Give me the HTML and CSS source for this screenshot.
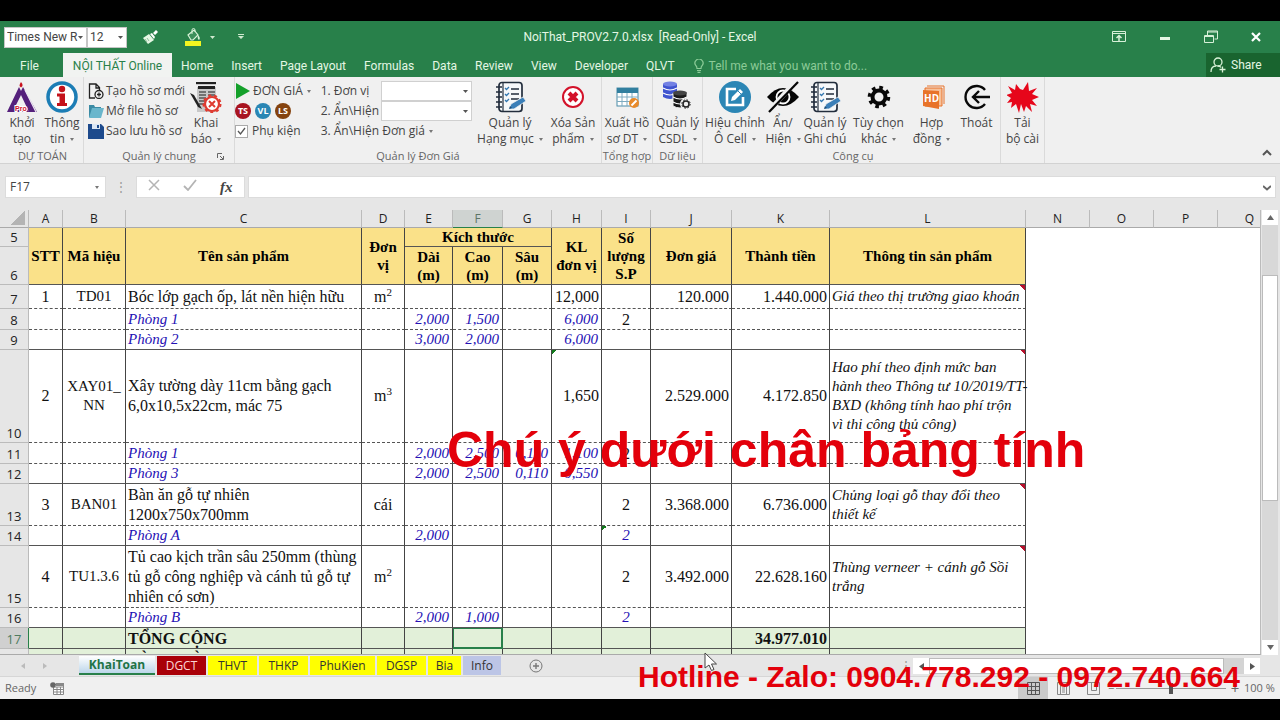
FILE: index.html
```html
<!DOCTYPE html>
<html lang="vi">
<head>
<meta charset="utf-8">
<title>NoiThat_PROV2.7.0.xlsx [Read-Only] - Excel</title>
<link rel="stylesheet" href="styles.css">
</head>
<body>
<svg class="defs" aria-hidden="true">
  <symbol id="i-note" viewBox="0 0 32 32">
    <rect x="5" y="1.5" width="23" height="29" rx="3" fill="#f6f8fa" stroke="#222d3c" stroke-width="1.7"/>
    <path d="M9 2v28" stroke="#222d3c" stroke-width="1.2"/>
    <path d="M2 6h6M2 11h6M2 16h6M2 21h6M2 26h6" stroke="#222d3c" stroke-width="1.7"/>
    <path d="M11 7l1.500 1.500L15 6M11 13l1.500 1.500L15 12M11 19l1.500 1.500L15 18" fill="none" stroke="#3277b0" stroke-width="1.300"/>
    <path d="M17 8h8M17 13h8M17 18h8" stroke="#222d3c" stroke-width="1.400"/>
    <path d="M15 28l2-5 12-7 3 4-12 8z" fill="#3b7fb8" stroke="#f0f0f0" stroke-width=".8"/>
    <path d="M15 28l1-3 2 2z" fill="#174b78"/>
  </symbol>
</svg>
<div class="app">
  <header class="top">
    <div class="titlebar">
      <div class="quick">
        <select class="qfont" aria-label="Font"><option>Times New R</option></select>
        <select class="qsize" aria-label="Font size"><option>12</option></select>
        <button class="qbtn brush" aria-label="Format painter"><svg width="16" height="15" viewBox="0 0 16 15"><path d="M1 8l6-4 5 6-6 4z" fill="#e6f7e4"/><path d="M8 4l2-1 3 4-1 2zM11 3l3-3 2 2-3 3z" fill="#fff"/><path d="M3 9l2 3M5 8l2 3" stroke="#68a67c" stroke-width=".7"/></svg></button>
        <button class="qbtn fill" aria-label="Fill colour"><svg width="16" height="18" viewBox="0 0 16 18"><path d="M3 7l6-5 4 5-5 5H6z" fill="#3d8f5b" stroke="#d9f2d8" stroke-width="1.200"/><path d="M7 6V2q0-1.500 1.500-1.500T10 2v2" fill="none" stroke="#d9f2d8"/><path d="M13 7q3 3 1 5-2-1-1-5z" fill="#d9f2d8"/><rect y="13" width="16" height="5" fill="#f3f520"/></svg></button>
        <button class="qbtn mini" aria-label="More fill colours"><svg width="5" height="3"><path d="M0 0h5L2.500 3z" fill="#cfe9cf"/></svg></button>
        <button class="qbtn custom" aria-label="Customize toolbar"><svg width="6" height="6"><path d="M0 0h6v1H0zM0 2h6L3 5z" fill="#cfe9cf"/></svg></button>
      </div>
      <div class="doc">NoiThat_PROV2.7.0.xlsx&nbsp; [Read-Only] - Excel</div>
      <div class="win">
        <button aria-label="Ribbon display options"><svg width="14" height="12" viewBox="0 0 14 12" fill="none" stroke="#d7f0d8"><path d="M.5.5h13v10H.5zM.5 2.500h13"/><path d="M7 10V4.500M4.500 7L7 4.500 9.500 7" stroke-width="1.500"/></svg></button>
        <button aria-label="Minimize"><svg width="14" height="12"><path d="M2 6h10v3H2z" fill="#e4f7e4"/></svg></button>
        <button aria-label="Restore"><svg width="14" height="14" viewBox="0 0 14 14" fill="none" stroke="#d7f0d8"><path d="M.5 5.500h9v7h-9zM.5 6.500h9M3.500 5V1h10v8h-3M3.500 2h10"/></svg></button>
        <button aria-label="Close"><svg width="12" height="12" viewBox="0 0 12 12"><path d="M2 2l8 8M10 2l-8 8" stroke="#fff" stroke-width="2.200"/></svg></button>
      </div>
    </div>
    <nav class="tabs">
      <button class="file">File</button>
      <button class="active">NỘI THẤT Online</button>
      <button>Home</button><button>Insert</button><button>Page Layout</button><button>Formulas</button><button>Data</button><button>Review</button><button>View</button><button>Developer</button><button>QLVT</button>
      <button class="tell"><svg width="10" height="14" viewBox="0 0 10 14" fill="none" stroke="#8ccb98" stroke-width="1.200"><path d="M3 9.500q0-2-1.200-3A4 4 0 1 1 8.200 6.500Q7 7.500 7 9.500zM3 11.500h4M3.500 13.300h3"/></svg>Tell me what you want to do...</button>
      <button class="share"><svg width="16" height="16" viewBox="0 0 16 16" fill="none" stroke="#d9f2d8" stroke-width="1.300"><circle cx="8" cy="5" r="4"/><path d="M1 15q0-6 5-6M8 9q2 0 3 1.500M12.500 9.500v6M9.500 12.500h6"/></svg>Share</button>
    </nav>
  </header>

  <section class="ribbon">
    <div class="group g1">
      <div class="tools">
        <button class="big"><svg class="ico" viewBox="0 0 32 32"><path d="M15 1q2 2 1.500 4L15 6.500 13.500 5Q13.500 3 15 1z" fill="#c8101c"/><path d="M13 6L1 31h22l-3-5H9l6-12 8 17h8L17 6l-2 4z" fill="#55207c"/><path d="M19 9l11 22" stroke="#efe9f4" stroke-width="1.200"/><text x="9" y="30" class="pro">Pro</text></svg><span>Khởi<br>tạo</span></button>
        <button class="big"><svg class="ico" viewBox="0 0 32 32"><circle cx="16" cy="16" r="14" fill="#fff" stroke="#1c7db5" stroke-width="3.500"/><circle cx="16" cy="8" r="3.200" fill="#c4121b"/><path d="M11 12.500h8V22h2v3H11v-3h2.500v-6.500H11z" fill="#c4121b"/></svg><span>Thông<br>tin <i class="dd"></i></span></button>
      </div>
      <div class="glabel">DỰ TOÁN</div>
    </div>
    <div class="group g2">
      <div class="tools">
        <div class="stack">
          <button><svg class="sico" viewBox="0 0 16 16" fill="none" stroke="#222" stroke-width="1.300"><path d="M7 15H1.500V1H8l3.500 3.500V7M8 1v4h4"/><circle cx="11" cy="11.500" r="4"/><path d="M11 9.500v4M9 11.500h4"/></svg>Tạo hồ sơ mới</button>
          <button><svg class="sico" viewBox="0 0 16 16"><path d="M1 2h5l1 2h6v10H1z" fill="#3c8ba4"/><path d="M4 5h12l-3 10H1z" fill="#6ab6cc"/></svg>Mở file hồ sơ</button>
          <button><svg class="sico" viewBox="0 0 16 16"><path d="M0 1h13l3 3v12H0z" fill="#1d4a8c"/><path d="M4 1h8v5H4z" fill="#dbe6f4"/><path d="M9 2h2v3H9z" fill="#1d4a8c"/></svg>Sao lưu hồ sơ</button>
        </div>
        <button class="big"><svg class="ico" viewBox="0 0 32 32"><path d="M6 1h20v3H6zM7 6h19v25H7z" fill="#c8c8c8"/><path d="M6 1h20v2H6zM8 5h17v3H8z" fill="#222"/><path d="M9 11h7M9 14h7M9 17h7M9 20h7M9 23h7M18 11h7M18 14h7M18 17h7" stroke="#555" stroke-width="1.500"/><path d="M0 12l4 2 8 14-4-2z" fill="#222"/><circle cx="22" cy="23" r="7" fill="#fff" stroke="#df3a30" stroke-width="2.200"/><circle cx="22" cy="23" r="8.500" fill="none" stroke="#df3a30" stroke-width="2" stroke-dasharray="3 3"/><path d="M19 20l6 6M25 20l-6 6" stroke="#df3a30" stroke-width="2"/></svg><span>Khai<br>báo <i class="dd"></i></span></button>
      </div>
      <div class="glabel">Quản lý chung<svg class="launch" width="7" height="7" viewBox="0 0 7 7" fill="none" stroke="#666"><path d="M.5 5V.5H5M3 3l3 3M6.500 3v3.500H3"/></svg></div>
    </div>
    <div class="group g3">
      <div class="tools">
        <div class="stack unit">
          <button><svg class="sico" viewBox="0 0 16 16"><path d="M1 0l14 8L1 16z" fill="#14a02a"/></svg>ĐƠN GIÁ <i class="dd"></i></button>
          <div class="dots"><button class="c1">TS</button><button class="c2">VL</button><button class="c3">LS</button></div>
          <label><input type="checkbox" checked>Phụ kiện</label>
        </div>
        <div class="stack combos">
          <div class="row"><label for="dv">1. Đơn vị</label><select id="dv"></select></div>
          <div class="row"><label for="ah">2. Ẩn\Hiện</label><select id="ah"></select></div>
          <button>3. Ẩn\Hiện Đơn giá <i class="dd"></i></button>
        </div>
        <button class="big w69"><svg class="ico"><use href="#i-note"/></svg><span>Quản lý<br>Hạng mục <i class="dd"></i></span></button>
        <button class="big w56"><svg class="ico" viewBox="0 0 32 32"><circle cx="16" cy="16" r="10" fill="#fff" stroke="#d3122a" stroke-width="2"/><path d="M12 12l8 8M20 12l-8 8" stroke="#d3122a" stroke-width="4"/></svg><span>Xóa Sản<br>phẩm <i class="dd"></i></span></button>
      </div>
      <div class="glabel">Quản lý Đơn Giá</div>
    </div>
    <div class="group g4">
      <div class="tools"><button class="big"><svg class="ico" viewBox="0 0 32 32"><rect x="6" y="7" width="21" height="18" fill="#fff" stroke="#4b8ba8"/><path d="M6 7h21v5H6z" fill="#317f9f"/><path d="M6 16h21M6 20.500h21M11 12v13M16 12v13M21 12v13" stroke="#7eabc0"/><circle cx="23" cy="22" r="5" fill="#e88a2a"/><path d="M20.500 24.500l5-5" stroke="#fff" stroke-width="2"/></svg><span>Xuất Hồ<br>sơ DT <i class="dd"></i></span></button></div>
      <div class="glabel">Tổng hợp</div>
    </div>
    <div class="group g5">
      <div class="tools"><button class="big"><svg class="ico" viewBox="0 0 32 32"><path d="M1 3v13q7 4 14 0V3z" fill="#4054cf"/><ellipse cx="8" cy="3" rx="7" ry="2.500" fill="#7381e4"/><path d="M1 7q7 4 14 0M1 12q7 4 14 0" fill="none" stroke="#fff" stroke-width="1.200"/><path d="M11 12v13q7 4 14 0V12z" fill="#1b1b1b" stroke="#f0f0f0"/><ellipse cx="18" cy="12" rx="7" ry="2.500" fill="#444"/><path d="M11 16q7 4 14 0M11 21q7 4 14 0" fill="none" stroke="#fff" stroke-width="1.200"/><circle cx="24" cy="23" r="6" fill="#f0f0f0"/><circle cx="24" cy="23" r="3" fill="none" stroke="#222" stroke-width="1.500"/><circle cx="24" cy="23" r="4.200" fill="none" stroke="#222" stroke-dasharray="1.600 1.700"/></svg><span>Quản lý<br>CSDL <i class="dd"></i></span></button></div>
      <div class="glabel">Dữ liệu</div>
    </div>
    <div class="group g6">
      <div class="tools">
        <button class="big w58"><svg class="ico" viewBox="0 0 32 32"><circle cx="16" cy="16" r="16" fill="#2b86b5"/><path d="M17 8H8v16h16v-8" fill="none" stroke="#fff" stroke-width="2.600"/><path d="M13 16l8-8 3 3-8 8-4 1z" fill="#fff"/><path d="M19 10l3 3" stroke="#2b86b5"/></svg><span>Hiệu chỉnh<br>Ô Cell <i class="dd"></i></span></button>
        <button class="big w38"><svg class="ico" viewBox="0 0 32 32"><path d="M0 16Q16-2 32 16 16 34 0 16z" fill="#050505"/><circle cx="16" cy="16" r="6.500" fill="none" stroke="#fff" stroke-width="1.800"/><circle cx="16" cy="16" r="3" fill="#050505"/><path d="M29 0L1 31" stroke="#f0f0f0" stroke-width="5"/><path d="M31 1L2 31" stroke="#050505" stroke-width="2.200"/></svg><span>Ẩn/<br>Hiện <i class="dd"></i></span></button>
        <button class="big w46"><svg class="ico"><use href="#i-note"/></svg><span>Quản lý<br>Ghi chú</span></button>
        <button class="big w61"><svg class="ico" viewBox="0 0 32 32" fill="none" stroke="#080808"><circle cx="16" cy="16" r="6.500" stroke-width="4"/><circle cx="16" cy="16" r="9.500" stroke-width="3.500" stroke-dasharray="3.600 3.860"/></svg><span>Tùy chọn<br>khác <i class="dd"></i></span></button>
        <button class="big w44"><svg class="ico" viewBox="0 0 32 32"><path d="M11 5h17v18" fill="none" stroke="#e8732a"/><path d="M9 7h17v18H9z" fill="#f7c19a" stroke="#e8732a"/><path d="M7 9l16 1v18L7 25z" fill="#e8732a"/><text x="8" y="21" class="hd">HD</text></svg><span>Hợp<br>đồng <i class="dd"></i></span></button>
        <button class="big w44"><svg class="ico" viewBox="0 0 32 32" fill="none" stroke="#080808" stroke-width="2.400"><path d="M24 9A11 11 0 1 0 24 23M29 16H12M18 10l-6 6 6 6"/></svg><span>Thoát</span></button>
      </div>
      <div class="glabel">Công cụ</div>
    </div>
    <div class="group g7">
      <div class="tools"><button class="big"><svg class="ico" viewBox="0 0 32 32"><path d="M16 9l5-8 1 9 8-3-5 6 7 3-7 3 5 6-7-2 2 8-6-6-2 6-3-8-2 9-3-9-5 4 1-6-5 1 4-5-5-3 6-2-4-7 7 4 1-6 4 5z" fill="#e6061a"/></svg><span>Tải<br>bộ cài</span></button></div>
    </div>
    <button class="collapse" aria-label="Collapse ribbon"><svg width="10" height="7" viewBox="0 0 10 7"><path d="M1 6l4-4 4 4" fill="none" stroke="#555" stroke-width="2"/></svg></button>
  </section>

  <section class="formula">
    <div class="namebox"><input aria-label="Name box" value="F17"><button aria-label="Names"><i class="dd"></i></button></div>
    <span class="grip">⋮</span>
    <div class="fx"><button aria-label="Cancel"><svg width="12" height="12" viewBox="0 0 12 12"><path d="M1 1l10 10M11 1L1 11" stroke="#b4b4b4" stroke-width="1.500"/></svg></button><button aria-label="Enter"><svg width="14" height="12" viewBox="0 0 14 12"><path d="M1 7l4 4 8-10" fill="none" stroke="#b4b4b4" stroke-width="1.800"/></svg></button><button class="fn" aria-label="Insert function">fx</button></div>
    <div class="fbar"><input aria-label="Formula bar"><button aria-label="Expand formula bar"><svg width="8" height="6" viewBox="0 0 8 6"><path d="M0 1l4 3.500L8 1" fill="none" stroke="#666" stroke-width="2"/></svg></button></div>
  </section>

  <main class="work">
    <div class="grid">
      <table>
        <colgroup><col class="k0"><col class="ka"><col class="kb"><col class="kc"><col class="kd"><col class="ke"><col class="kf"><col class="kg"><col class="kf"><col class="kg"><col class="kj"><col class="kk"><col class="kl"><col class="kn"><col class="kn"><col class="kn"><col class="kn"></colgroup>
        <thead><tr class="cols"><th class="corner"></th><th>A</th><th>B</th><th>C</th><th>D</th><th>E</th><th class="sel">F</th><th>G</th><th>H</th><th>I</th><th>J</th><th>K</th><th>L</th><th>N</th><th>O</th><th>P</th><th>Q</th></tr></thead>
        <tbody>
        <tr class="h19 hd1"><th class="rn">5</th><th rowspan="2">STT</th><th rowspan="2">Mã hiệu</th><th rowspan="2">Tên sản phẩm</th><th rowspan="2">Đơn<br>vị</th><th colspan="3">Kích thước</th><th rowspan="2">KL<br>đơn vị</th><th rowspan="2">Số<br>lượng<br>S.P</th><th rowspan="2">Đơn giá</th><th rowspan="2">Thành tiền</th><th rowspan="2">Thông tin sản phẩm</th><td class="blank" rowspan="14" colspan="4"></td></tr>
        <tr class="h38 hd1"><th class="rn">6</th><th>Dài<br>(m)</th><th>Cao<br>(m)</th><th>Sâu<br>(m)</th></tr>
        <tr class="h24 dash"><th class="rn">7</th><td>1</td><td class="code">TD01</td><td class="name">Bóc lớp gạch ốp, lát nền hiện hữu</td><td>m<sup>2</sup></td><td></td><td></td><td></td><td class="num">12,000</td><td></td><td class="num">120.000</td><td class="num">1.440.000</td><td class="info note">Giá theo thị trường giao khoán</td></tr>
        <tr class="h21 dash sub"><th class="rn">8</th><td></td><td></td><td>Phòng 1</td><td></td><td>2,000</td><td>1,500</td><td></td><td>6,000</td><td class="plain">2</td><td></td><td></td><td></td></tr>
        <tr class="h20 sub"><th class="rn">9</th><td></td><td></td><td>Phòng 2</td><td></td><td>3,000</td><td>2,000</td><td></td><td>6,000</td><td></td><td></td><td></td><td></td></tr>
        <tr class="h93 dash"><th class="rn">10</th><td>2</td><td class="code">XAY01_<br>NN</td><td class="name">Xây tường dày 11cm bằng gạch 6,0x10,5x22cm, mác 75</td><td>m<sup>3</sup></td><td></td><td></td><td></td><td class="num err">1,650</td><td></td><td class="num">2.529.000</td><td class="num">4.172.850</td><td class="info note">Hao phí theo định mức ban<br>hành theo Thông tư 10/2019/TT-<br>BXD (không tính hao phí trộn<br>vì thi công thủ công)</td></tr>
        <tr class="h21 dash sub"><th class="rn">11</th><td></td><td></td><td>Phòng 1</td><td></td><td>2,000</td><td>2,500</td><td>0,110</td><td>1,100</td><td class="plain">2</td><td></td><td></td><td></td></tr>
        <tr class="h20 sub"><th class="rn">12</th><td></td><td></td><td>Phòng 3</td><td></td><td>2,000</td><td>2,500</td><td>0,110</td><td>0,550</td><td></td><td></td><td></td><td></td></tr>
        <tr class="h42 dash"><th class="rn">13</th><td>3</td><td class="code">BAN01</td><td class="name">Bàn ăn gỗ tự nhiên<br>1200x750x700mm</td><td>cái</td><td></td><td></td><td></td><td></td><td>2</td><td class="num">3.368.000</td><td class="num">6.736.000</td><td class="info note">Chủng loại gỗ thay đổi theo<br>thiết kế</td></tr>
        <tr class="h20 sub"><th class="rn">14</th><td></td><td></td><td>Phòng A</td><td></td><td>2,000</td><td></td><td></td><td></td><td class="err mid">2</td><td></td><td></td><td></td></tr>
        <tr class="h62 dash"><th class="rn">15</th><td>4</td><td class="code">TU1.3.6</td><td class="name">Tủ cao kịch trần sâu 250mm (thùng<br>tủ gỗ công nghiệp và cánh tủ gỗ tự<br>nhiên có sơn)</td><td>m<sup>2</sup></td><td></td><td></td><td></td><td></td><td>2</td><td class="num">3.492.000</td><td class="num">22.628.160</td><td class="info note">Thùng verneer + cánh gỗ Sồi<br>trắng</td></tr>
        <tr class="h20 sub"><th class="rn">16</th><td></td><td></td><td>Phòng B</td><td></td><td>2,000</td><td>1,000</td><td></td><td></td><td class="mid">2</td><td></td><td></td><td></td></tr>
        <tr class="h21 total"><th class="rn selrow">17</th><td></td><td></td><td class="name">TỔNG CỘNG</td><td></td><td></td><td class="cursor-cell"></td><td></td><td></td><td></td><td></td><td class="num">34.977.010</td><td></td></tr>
        <tr class="h21 total"><th class="rn"></th><td></td><td></td><td class="name">LÀM TRÒN</td><td></td><td></td><td></td><td></td><td></td><td></td><td></td><td></td><td></td></tr>
        </tbody>
      </table>
    </div>
    <div class="vscroll"><button aria-label="Scroll up"><svg width="7" height="5"><path d="M0 5h7L3.500 0z" fill="#666"/></svg></button><span class="v1"></span><span class="v2"></span><span class="v3"></span><button aria-label="Scroll down"><svg width="7" height="5"><path d="M0 0h7L3.500 5z" fill="#666"/></svg></button></div>
    <p class="banner">Chú ý dưới chân bảng tính</p>
  </main>

  <footer>
    <div class="sheets">
      <div class="navs"><svg width="4" height="6"><path d="M4 0v6L0 3z" fill="#bbb"/></svg><svg width="4" height="6"><path d="M0 0v6l4-3z" fill="#bbb"/></svg></div>
      <button class="s-on">KhaiToan</button><button class="s-red w50">DGCT</button><button class="w50">THVT</button><button class="w52">THKP</button><button class="w67">PhuKien</button><button class="w50">DGSP</button><button class="w35">Bia</button><button class="s-info">Info</button>
      <button class="add" aria-label="New sheet"><svg width="14" height="14" viewBox="0 0 14 14" fill="none" stroke="#777"><circle cx="7" cy="7" r="6"/><path d="M7 4v6M4 7h6" stroke-width="1.400"/></svg></button>
      <div class="hscroll"><span class="grip">⋮</span><button aria-label="Scroll left"><svg width="5" height="7"><path d="M5 0v7L0 3.500z" fill="#555"/></svg></button><span class="thumb"></span><span class="gut"></span><button aria-label="Scroll right"><svg width="5" height="7"><path d="M0 0v7l5-3.500z" fill="#555"/></svg></button></div>
    </div>
    <div class="status">
      <span>Ready</span>
      <svg width="15" height="13" viewBox="0 0 15 13"><path d="M3.500 2.500h10v10h-10zM3.500 5h10M3.500 7.500h10M3.500 10h10M7 5v7M10.500 5v7" fill="#fff" stroke="#888"/><path d="M6 1h8v3H6z" fill="#888"/><circle cx="3" cy="3" r="2.800" fill="#666"/></svg>
      <div class="views">
        <button class="on" aria-label="Normal"><svg width="13" height="13" viewBox="0 0 13 13" fill="none" stroke="#555"><path d="M.5.500h12v12H.5zM.5 4.500h12M.5 8.500h12M4.500.500v12M8.500.500v12"/></svg></button>
        <button aria-label="Page layout"><svg width="13" height="13" viewBox="0 0 13 13" fill="none" stroke="#888"><path d="M.5.500h12v12H.5zM3.500 3.500h6v9M3.500 3.500v9M5 6h3M5 8h3M5 10h3"/></svg></button>
        <button aria-label="Page break preview"><svg width="13" height="13" viewBox="0 0 13 13" fill="none" stroke="#888"><path d="M.5.500h12v12H.5zM4.500.500v8h5v-8"/></svg></button>
        <span class="minus">−</span><input type="range" aria-label="Zoom" value="50"><span class="plus">+</span><span class="pct">100 %</span>
      </div>
    </div>
    <svg class="pointer" width="14" height="20" viewBox="0 0 14 20"><path d="M1 1v15l4-3 2.500 5.500 2.500-1L7.500 12h5z" fill="#fff" stroke="#444"/></svg>
    <p class="hotline">Hotline - Zalo: 0904.778.292 - 0972.740.664</p>
  </footer>
</div>
</body>
</html>
```
FILE: styles.css
```css
* { box-sizing: border-box; }
body { margin: 0; background: #000; font: 12px/16px "Open Sans", "Noto Sans", sans-serif; color: #444; }
button { border: 0; margin: 0; padding: 0; background: none; font: inherit; color: inherit; white-space: nowrap; }
select, input { font: inherit; color: inherit; margin: 0; }
p { margin: 0; }
.defs { position: absolute; width: 0; height: 0; }
.app { display: flex; flex-direction: column; height: 100vh; padding: 21px 0; overflow: hidden; }

/* title bar and tabs */
.top { background: #28804a; color: #e4f7e4; font-family: Roboto, "Open Sans", sans-serif; }
.titlebar { display: grid; grid-template-columns: 1fr auto 1fr; align-items: center; height: 32px; }
.quick { display: flex; align-items: center; padding-left: 4px; }
.quick select, .combos select { appearance: none; border: 1px solid #c6c6c6; border-radius: 0; color: #444; height: 21px; padding: 0 0 0 2px; background: #fff url("data:image/svg+xml,%3Csvg xmlns='http://www.w3.org/2000/svg' width='5' height='3'%3E%3Cpath d='M0 0h5L2.500 3z' fill='%23555'/%3E%3C/svg%3E") no-repeat right 3px center; }
.qfont { width: 83px; }
.qsize { width: 40px; }
.qbtn { display: flex; }
.brush { margin-left: 15px; }
.fill { margin-left: 27px; }
.mini { margin-left: 9px; }
.custom { margin-left: 23px; }
.win { display: flex; justify-content: flex-end; gap: 32px; padding-right: 18px; }
.win button { display: flex; align-items: center; }
.tabs { display: flex; height: 24px; }
.tabs button { padding: 1px 9px 0; }
.tabs .file { width: 63px; padding: 1px 4px 0 0; }
.tabs .active { width: 109px; padding: 1px 0 0; background: #f1f3f1; color: #28804a; }
.tabs .tell { display: flex; align-items: center; gap: 5px; color: #8ccb98; padding-left: 10px; }
.tabs .share { display: flex; align-items: center; gap: 5px; margin-left: auto; width: 74px; padding: 0 4px; background: #19642f; }

/* ribbon */
.ribbon { display: flex; height: 87px; background: #f0f0f0; border-bottom: 1px solid #d2d2d2; }
.group { position: relative; display: flex; flex-direction: column; justify-content: space-between; padding: 4px 0 0; border-right: 1px solid #dadada; }
.tools { display: flex; }
.glabel { font-size: 11px; line-height: 14px; text-align: center; color: #666; }
.launch { position: absolute; right: 10px; bottom: 3px; }
.g1 { width: 84px; padding-left: 2px; }
.g1 .big { width: 40px; }
.g2 { width: 151px; }
.g2 .stack { width: 101px; padding-left: 4px; }
.g2 .big { width: 42px; }
.g3 { width: 367px; }
.g4 { width: 51px; }
.g5 { width: 50px; }
.g6 { width: 298px; padding-left: 3px; }
.g7 { width: 44px; }
.g4 .big, .g5 .big, .g7 .big { width: 100%; }
.big { display: flex; flex-direction: column; align-items: center; flex: none; }
.big span { margin-top: 2px; }
.ico { width: 32px; height: 32px; }
.w38 { width: 38px; } .w44 { width: 45px; } .w46 { width: 46px; } .w56 { width: 56px; } .w58 { width: 58px; } .w61 { width: 61px; } .w69 { width: 70px; }
.stack { display: flex; flex-direction: column; }
.stack > * { display: flex; align-items: center; height: 20px; gap: 2px; }
.sico { width: 16px; height: 16px; flex: none; }
.dd { display: inline-block; border: 2px solid transparent; border-top: 3px solid #777; border-bottom: 0; vertical-align: middle; margin-left: 2px; }
.unit { width: 86px; }
.dots button { width: 16px; height: 16px; border-radius: 50%; color: #fff; font: bold 9px/16px "Open Sans", sans-serif; margin-right: 2px; }
.c1 { background: #a81420; } .c2 { background: #2a86b4; } .c3 { background: #85430f; }
.unit input { appearance: none; width: 13px; height: 13px; border: 1px solid #aaa; background: #fff; margin-right: 2px; }
.unit input:checked { background: #fff url("data:image/svg+xml,%3Csvg xmlns='http://www.w3.org/2000/svg' width='11' height='11'%3E%3Cpath d='M2 5l2.500 3L9 2' fill='none' stroke='%23555' stroke-width='1.300'/%3E%3C/svg%3E") center no-repeat; }
.combos { width: 155px; }
.combos label { width: 58px; white-space: nowrap; }
.combos select { width: 91px; height: 20px; border-color: #d0d0d0; }
.collapse { margin: auto 8px 3px auto; }
.pro { font: bold 7px "Liberation Sans", sans-serif; fill: #d3122a; stroke: #fff; stroke-width: 2px; paint-order: stroke; }
.hd { font: bold 10px "Open Sans", sans-serif; fill: #fff; }

/* formula bar */
.formula { display: flex; align-items: center; height: 46px; padding: 0 4px 0 5px; background: #e6e6e6; }
.formula > div { height: 22px; background: #fff; display: flex; align-items: center; border: 1px solid #dcdcdc; }
.formula input { border: 0; outline: 0; background: none; min-width: 0; flex: 1; padding: 0 4px; }
.namebox { width: 101px; }
.namebox button { width: 18px; }
.grip { color: #999; }
.formula .grip { width: 30px; text-align: center; }
.formula .fx { width: 109px; justify-content: space-around; margin-right: 3px; }
.fn { font: italic bold 15px "Liberation Serif", serif; }
.formula .fbar { flex: 1; }
.fbar button { width: 16px; }

/* worksheet */
.work { position: relative; flex: 1; min-height: 0; display: flex; background: #e6e6e6; }
.grid { flex: 1; min-width: 0; overflow: hidden; background: #fff; border-right: 1px solid #bbb; border-bottom: 1px solid #aaa; }
table { table-layout: fixed; width: 1282px; border-collapse: separate; border-spacing: 0; font: 16px/20px "Liberation Serif", serif; color: #111; }
.k0 { width: 29px; } .ka { width: 34px; } .kb { width: 63px; } .kc { width: 236px; } .kd { width: 43px; } .ke { width: 48px; } .kf { width: 50px; } .kg { width: 49px; } .kj { width: 81px; } .kk { width: 98px; } .kl { width: 196px; } .kn { width: 64px; }
th, td { padding: 0; text-align: center; vertical-align: middle; white-space: nowrap; border-right: 1px solid #444; border-bottom: 1px solid #555; }
.cols th { height: 18px; font: 12px/17px "Open Sans", sans-serif; color: #222; background: #e6e6e6; border-right-color: #bbb; border-bottom-color: #aaa; }
.cols .corner { background: linear-gradient(135deg, transparent 50%, #b4b4b4 50%) no-repeat right 3px bottom 2px / 14px 14px #e6e6e6; }
.cols .sel { background: #cfd3d1; color: #5c7466; border-bottom-color: #28804a; }
.rn { font: 13px/16px "Open Sans", sans-serif; color: #222; background: #e6e6e6; vertical-align: bottom; border-color: #bbb; padding-bottom: 1px; }
.hd1 th:not(.rn) { background: #fae189; font-size: 15px; line-height: 18px; color: #000; }
.h19 { height: 19px; } .h20 { height: 20px; } .h21 { height: 21px; } .h24 { height: 24px; } .h38 { height: 38px; } .h42 { height: 42px; } .h62 { height: 62px; } .h93 { height: 93px; }
.h20, .h21 { line-height: 19px; }
.dash td { border-bottom-style: dashed; }
.code { font-size: 15px; line-height: 19px; }
.name { text-align: left; padding-left: 2px; white-space: normal; }
.num { text-align: right; padding-right: 2px; }
.info { text-align: left; padding-left: 2px; font-style: italic; font-size: 15px; line-height: 19px; }
.note { background: linear-gradient(45deg, transparent 50%, #b8102c 50%) no-repeat top right / 5px 5px; }
.err { background: linear-gradient(135deg, #127a1c 50%, transparent 50%) no-repeat top left / 5px 5px; }
.sub td { font-style: italic; font-size: 15px; color: #2410b4; text-align: right; padding-right: 3px; }
.sub td:nth-child(4) { text-align: left; padding: 0 0 0 2px; }
.sub .mid, .sub .plain { text-align: center; padding: 0; }
.sub .plain { font-style: normal; font-size: 16px; color: #111; }
sup { font-size: 11px; line-height: 0; }
.total td { background: #e2f0d9; font-weight: bold; }
.total .selrow { background: #d0d0d0; color: #4e7b60; border-right-color: #28804a; }
.total .cursor-cell { box-shadow: inset 0 0 0 1px #28804a; border-color: #28804a; }
.blank { border: 0; }
.vscroll { display: flex; flex-direction: column; width: 19px; padding: 0 2px 0 1px; }
.vscroll button { height: 15px; background: #fff; display: flex; align-items: center; justify-content: center; }
.v1 { flex: 50; background: #d8d8d8; }
.v2 { flex: 225; background: #fff; border: 1px solid #bbb; }
.v3 { flex: 140; background: #d8d8d8; }
.banner { position: absolute; left: 447px; top: 212px; font: bold 50px/56px "Liberation Sans", sans-serif; color: #e3000b; white-space: nowrap; }

/* sheet tabs and status bar */
footer { position: relative; }
.sheets { display: flex; height: 22px; background: #e6e6e6; padding-top: 1px; border-bottom: 1px solid #d6d6d6; }
.navs { display: flex; align-items: center; gap: 18px; width: 79px; padding-left: 21px; }
.sheets > button { height: 19px; margin-right: 2px; background: #ff0; color: #333; font-size: 12px; line-height: 18px; }
.sheets > .s-on { width: 76px; background: linear-gradient(#fff, #bcd6ea); color: #217346; font-weight: bold; border-bottom: 2px solid #28804a; }
.sheets > .s-red { background: #a90008; color: #fbd5d5; }
.sheets > .s-info { width: 38px; background: #bcc5e6; }
.w35 { width: 33px; } .w50 { width: 49px; } .w52 { width: 49px; } .w67 { width: 65px; }
.sheets > .add { display: flex; align-items: center; background: none; margin-left: 26px; }
.hscroll { display: flex; margin-left: auto; height: 16px; margin-top: 2px; width: 380px; padding-right: 20px; align-items: stretch; }
.hscroll button { width: 16px; background: #fff; display: flex; align-items: center; justify-content: center; }
.hscroll .grip { width: 13px; }
.thumb { flex: 1; background: #fff; border: 1px solid #bbb; }
.gut { width: 20px; background: #d4d4d4; }
.status { display: flex; align-items: center; gap: 14px; height: 22px; padding-left: 5px; background: #f0f0f0; font-size: 11px; color: #666; }
.views { display: flex; align-items: center; margin-left: auto; }
.views button { width: 30px; height: 22px; display: flex; align-items: center; justify-content: center; }
.views .on { background: #cacaca; }
.views input { appearance: none; width: 110px; height: 1px; background: #999; }
.views input::-webkit-slider-thumb { appearance: none; width: 4px; height: 11px; background: #555; }
.minus { width: 8px; }
.plus { width: 18px; text-align: center; font-size: 15px; }
.pct { width: 36px; }
.hotline { position: absolute; left: 638px; top: 5px; font: bold 30px/34px "Liberation Sans", sans-serif; color: #e3000b; white-space: nowrap; }
.pointer { position: absolute; left: 704px; top: -3px; }
```
